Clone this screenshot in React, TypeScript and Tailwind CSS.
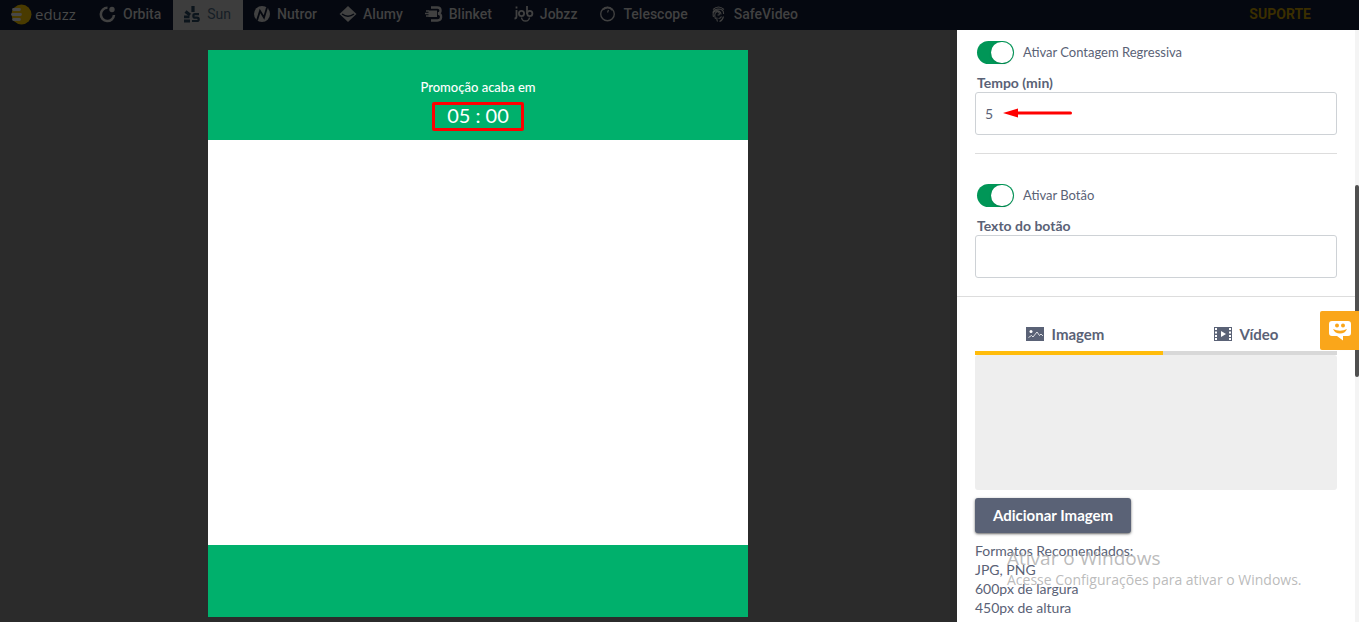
import React, { useState } from "react";

const OrbitaIcon = () => (
  <svg viewBox="0 0 18 18" className="h-[18px] w-[18px]" fill="none" stroke="currentColor">
    <path d="M8.500 2.800A6.600 6.600 0 1 0 15 10" strokeWidth="2.600" />
    <circle cx="13" cy="4.500" r="2.700" fill="currentColor" stroke="none" />
  </svg>
);

const SunIcon = () => (
  <svg viewBox="0 0 18 18" className="h-[18px] w-[18px]" fill="none" stroke="currentColor">
    <path d="M10 1v6" strokeWidth="3.200" />
    <path d="M2.500 6.500l4.500 3.500" strokeWidth="3.200" />
    <path d="M1 11.800h5.500M1 16h6" strokeWidth="2.800" />
    <path d="M16 9.200h-4c-2.200 0-2.200 3.400 0 3.400h2c2.300 0 2.300 3.400 0 3.400H9" strokeWidth="2.200" />
  </svg>
);

const NutrorIcon = () => (
  <svg viewBox="0 0 18 18" className="h-[18px] w-[18px]">
    <circle cx="9" cy="9" r="8" fill="currentColor" />
    <path d="M4 15.500 7 6l4 6.500L14 2.500" fill="none" stroke="#050810" strokeWidth="1.800" />
  </svg>
);

const AlumyIcon = () => (
  <svg viewBox="0 0 18 18" className="h-[18px] w-[18px]">
    <path d="M9 1 17.500 9 9 17 .5 9z" fill="currentColor" />
    <path d="M3 9q6 4.500 12 0" fill="none" stroke="#050810" strokeWidth="1.400" />
  </svg>
);

const BlinketIcon = () => (
  <svg viewBox="0 0 18 18" className="h-[18px] w-[18px]" fill="none" stroke="currentColor">
    <path d="M6 2.500h6.500c4 0 4 5.500.5 6 4.500.5 4 7-.5 7H6" strokeWidth="2.300" />
    <path d="M3.500 5.500H12v6.500H3.500z" fill="currentColor" stroke="none" />
    <path d="M1 6h3M0 8.500h4M1 11h3" strokeWidth="1.600" />
  </svg>
);

const JobzzIcon = () => (
  <svg viewBox="0 0 20 18" className="h-[18px] w-5" fill="none" stroke="currentColor" strokeWidth="1.800">
    <path d="M2.500 5v6.500q0 2-2 2M2.500 1.500v2" />
    <circle cx="7.500" cy="8.500" r="2.600" />
    <path d="M13 1v8" />
    <circle cx="15.800" cy="8.500" r="2.600" />
    <path d="M7.500 12.500q.5 3.500 4 3.500t4-3.500" strokeWidth="1.500" />
  </svg>
);

const TelescopeIcon = () => (
  <svg viewBox="0 0 18 18" className="h-[18px] w-[18px]" fill="none" stroke="currentColor">
    <circle cx="8.500" cy="9" r="6.800" strokeWidth="1.400" />
    <path d="M4 4.500Q9 .5 13.500 5" strokeWidth="1.800" />
    <path d="M8.500 7.500 9.500 5" strokeWidth="1.200" />
  </svg>
);

const SafeIcon = () => (
  <svg viewBox="0 0 18 18" className="h-[18px] w-[18px]" fill="none" stroke="currentColor" strokeWidth="1.100">
    <path d="M3 4.500q5.500-5 11 0M3 8q0-3.500 5-4 6 0 5.500 5M3.500 12q-.8-3 0-4.500c2-3 7.500-2.500 7.500 2M5.500 14c-1-3-1-6 1-7s3.500 1 2.500 3H7.500M7.500 16.500q-1-2-.5-4M9.500 16.500q3-1 4-5M8.500 13.500q2 0 3-2" />
  </svg>
);

const ImageIcon = () => (
  <svg viewBox="0 0 18 14" width="18" height="14">
    <path d="M0 0h18v14H0z" fill="#5a6276" />
    <circle cx="5" cy="4.500" r="1.500" fill="#fff" />
    <path d="m2.500 10.500 3-2 1.500 1.500 4-5 2.500 3.500L15 7l2 2" fill="none" stroke="#fff" strokeWidth=".8" />
  </svg>
);

const VideoIcon = () => (
  <svg viewBox="0 0 18 14" width="18" height="14">
    <path d="M0 0h18v14H0z" fill="#5a6276" />
    <path d="M1 1h2v2H1zM1 4.500h2v2H1zM1 8h2v2H1zM1 11h2v2H1zM15 1h2v2h-2zM15 4.500h2v2h-2zM15 8h2v2h-2zM15 11h2v2h-2z" fill="#fff" />
    <path d="m7 4 5 3-5 3z" fill="#fff" />
  </svg>
);

const products = [
  { name: "Orbita", Icon: OrbitaIcon },
  { name: "Sun", Icon: SunIcon, active: true },
  { name: "Nutror", Icon: NutrorIcon },
  { name: "Alumy", Icon: AlumyIcon },
  { name: "Blinket", Icon: BlinketIcon },
  { name: "Jobzz", Icon: JobzzIcon },
  { name: "Telescope", Icon: TelescopeIcon },
  { name: "SafeVideo", Icon: SafeIcon },
];

function TopBar() {
  return (
    <header className="flex h-[30px] shrink-0 items-stretch bg-[#050810] font-['Roboto',sans-serif] text-sm font-medium text-[#414141]">
      <a href="#eduzz" aria-label="eduzz" className="flex w-[89px] items-center gap-[3px] pb-0.5 pl-[11px]">
        <svg viewBox="0 0 21 21" className="h-[21px] w-[21px] shrink-0">
          <circle cx="10.500" cy="10.500" r="10" fill="#4a3b00" />
          <path d="M2.500 5.500h6M1.500 10.500h8M2.500 15.500h6" stroke="#484848" strokeWidth="2.800" strokeLinecap="round" />
        </svg>
        <span className="font-['Open_Sans',sans-serif] text-[15px] leading-none text-[#484848]">eduzz</span>
      </a>
      <nav className="flex">
        {products.map(({ name, Icon, active }) => (
          <a
            key={name}
            href={"#" + name}
            className={
              active
                ? "flex items-center gap-1.5 bg-[#3d3d3d] pr-3 pb-0.5 pl-2.5 text-[#0c151c]"
                : "flex items-center gap-1.5 pr-3 pb-0.5 pl-2.5"
            }
          >
            <Icon />
            <span className={active ? "font-normal text-[#161e26]" : ""}>{name}</span>
          </a>
        ))}
      </nav>
      <a href="#suporte" className="mr-12 ml-auto flex items-center pb-0.5 font-bold text-[#3b2e00]">
        SUPORTE
      </a>
    </header>
  );
}

function Toggle({ label }: { label: string }) {
  const [on, setOn] = useState(true);
  return (
    <label className="flex h-6 items-center gap-[9px] pl-0.5 text-[13px] leading-5">
      <span className="relative flex">
        <input
          type="checkbox"
          checked={on}
          onChange={() => setOn(!on)}
          className="peer h-[23px] w-[37px] appearance-none rounded-full bg-gray-300 checked:bg-[#009657]"
        />
        <span className="pointer-events-none absolute top-px left-px h-[21px] w-[22px] rounded-full bg-white shadow peer-checked:left-3.5" />
      </span>
      {label}
    </label>
  );
}

function Field({ id, label, initial }: { id: string; label: string; initial: string }) {
  const [value, setValue] = useState(initial);
  return (
    <div className="mt-2.5">
      <label htmlFor={id} className="block pl-0.5 text-sm leading-[18px] font-bold">
        {label}
      </label>
      <input
        id={id}
        value={value}
        onChange={(e) => setValue(e.target.value)}
        className="block h-[43px] w-full rounded-[3px] border border-[#ced2d6] bg-white px-[9px] text-sm outline-none"
      />
    </div>
  );
}

function Preview() {
  return (
    <main className="min-w-0 flex-1 bg-[#2b2b2b] pt-5 pr-px">
      <div className="mx-auto w-full max-w-[540px] bg-white">
        <div className="flex h-[90px] flex-col items-center bg-[#00b06c] pt-7 text-white">
          <p className="text-[13px] leading-[18px] font-medium">Promoção acaba em</p>
          <p className="mt-1.5 flex h-[29px] w-[92px] items-center justify-center rounded-xs border-3 border-[#ff0000] pb-1 text-xl leading-none">
            05 : 00
          </p>
        </div>
        <div className="h-[405px]" />
        <div className="h-[72px] bg-[#00b06c]" />
      </div>
    </main>
  );
}

export default function App() {
  return (
    <div className="relative flex h-screen flex-col overflow-hidden font-['Lato',sans-serif] text-[#5a6276]">
      <TopBar />
      <div className="flex min-h-0 flex-1">
        <Preview />
        <aside className="relative w-[402px] shrink-0 overflow-hidden bg-white">
          <section className="border-b border-[#dddddd] pt-2.5 pr-[22px] pb-[18px] pl-[18px]">
            <div className="relative">
              <Toggle label="Ativar Contagem Regressiva" />
              <Field id="tempo" label="Tempo (min)" initial="5" />
              <svg viewBox="0 0 70 12" className="pointer-events-none absolute bottom-4 left-7 h-3 w-[70px]">
                <path d="M0 6 15 1.500v9z" fill="#f00" />
                <path d="M12 6h55.500" stroke="#f00" strokeWidth="3" strokeLinecap="round" />
              </svg>
            </div>
            <hr className="mt-[18px] mb-[29px] border-[#dddddd]" />
            <Toggle label="Ativar Botão" />
            <Field id="texto" label="Texto do botão" initial="" />
          </section>
          <section className="pt-[18px] pr-[22px] pl-[18px]">
            <div role="tablist" className="flex text-[15px] font-bold">
              <button
                role="tab"
                aria-selected="true"
                className="flex h-10 w-[188px] items-center justify-center gap-2 border-b-4 border-[#ffbc0b] pt-0.5 pr-2"
              >
                <ImageIcon />
                Imagem
              </button>
              <button
                role="tab"
                aria-selected="false"
                className="flex h-10 flex-1 items-center justify-center gap-2 border-b-4 border-[#d8d8d8] pt-0.5 pr-2"
              >
                <VideoIcon />
                Vídeo
              </button>
            </div>
            <div className="h-[135px] rounded-[3px] bg-[#eeeeee]" />
            <button className="mt-2 h-[35px] rounded-[3px] bg-[#5a6276] px-[18px] text-[15px] font-bold text-white shadow-sm shadow-black/50">
              Adicionar Imagem
            </button>
            <p className="mt-2 text-sm leading-[19px]">
              Formatos Recomendados:
              <br />
              JPG, PNG
              <br />
              600px de largura
              <br />
              450px de altura
            </p>
          </section>
          <div className="absolute inset-y-0 right-0 w-1 bg-[#f4f4f4]">
            <div className="mt-[155px] h-48 rounded-sm bg-[#505050]" />
          </div>
          <button
            aria-label="Feedback"
            className="absolute top-[281px] right-0 flex h-[39px] w-[39px] items-center justify-center rounded-l-[2px] bg-[#faa61a]"
          >
            <svg viewBox="0 0 22 20" className="h-5 w-[22px]">
              <path d="M3 0h16q3 0 3 3v9q0 3-3 3h-5v4.500L8 15H3q-3 0-3-3V3q0-3 3-3z" fill="#fff" />
              <circle cx="8" cy="4.500" r="2" fill="#faa61a" />
              <circle cx="14" cy="4.500" r="2" fill="#faa61a" />
              <path d="M4 8q7 3.500 14 0-2 4.500-7 4.500T4 8z" fill="#faa61a" />
            </svg>
          </button>
        </aside>
      </div>
      <div className="pointer-events-none absolute right-[52px] bottom-8 w-[300px] font-['Open_Sans',sans-serif] whitespace-nowrap text-[#aaaaaa]/80">
        <p className="text-[19px] leading-6">Ativar o Windows</p>
        <p className="text-sm leading-5">Acesse Configurações para ativar o Windows.</p>
      </div>
    </div>
  );
}
